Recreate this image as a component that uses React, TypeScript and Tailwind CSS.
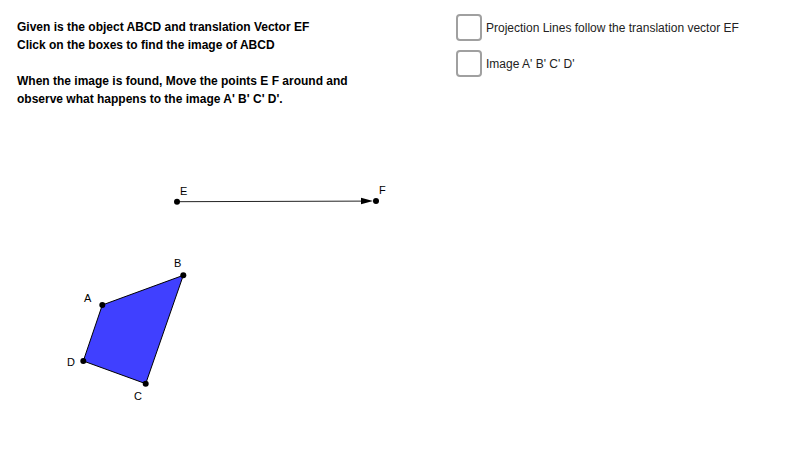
export default function App() {
  const font = { fontFamily: '"Liberation Sans", Arial, sans-serif' };
  return (
    <div className="relative w-[800px] h-[450px] bg-white overflow-hidden text-black" style={font}>
      <div className="flex">
        <div className="pl-[17px] pt-[18px] w-[456px] text-[12px] font-bold leading-[18px]">
          <p>Given is the object ABCD and translation Vector EF</p>
          <p>Click on the boxes to find the image of ABCD</p>
          <p className="mt-[18px]">When the image is found, Move the points E F around and</p>
          <p>observe what happens to the image A' B' C' D'.</p>
        </div>
        <div className="pt-[14px] flex flex-col gap-[9px] text-[12px]">
          <label className="flex items-center gap-[4px]">
            <span className="block w-[26px] h-[27px] rounded-[4px] border-2 border-[#a0a0a0] bg-white" />
            <span className="text-[#222]">Projection Lines follow the translation vector EF</span>
          </label>
          <label className="flex items-center gap-[4px]">
            <span className="block w-[26px] h-[27px] rounded-[4px] border-2 border-[#a0a0a0] bg-white" />
            <span className="text-[#222]">Image A' B' C' D'</span>
          </label>
        </div>
      </div>

      <svg className="absolute left-0 top-0" width="800" height="450" viewBox="0 0 800 450">
        <line x1="177" y1="201.7" x2="366" y2="201.1" stroke="#222" strokeWidth="1" />
        <polygon points="361,197.8 373,201 361,204.2" fill="#000" />
        <polygon
          points="102.3,305 183.3,275.3 145.7,383.7 83.3,361"
          fill="#4040ff"
          stroke="#000"
          strokeWidth="1"
        />
        {[
          [177, 201.7],
          [376, 201],
          [102.3, 305],
          [183.3, 275.3],
          [145.7, 383.7],
          [83.3, 361],
        ].map(([x, y], i) => (
          <circle key={i} cx={x} cy={y} r="3" fill="#000" />
        ))}
        <g fontSize="11" fill="#000" style={font}>
          <text x="180" y="195">E</text>
          <text x="379" y="194">F</text>
          <text x="174" y="267">B</text>
          <text x="84" y="302">A</text>
          <text x="67" y="366">D</text>
          <text x="134" y="400">C</text>
        </g>
      </svg>
    </div>
  );
}
